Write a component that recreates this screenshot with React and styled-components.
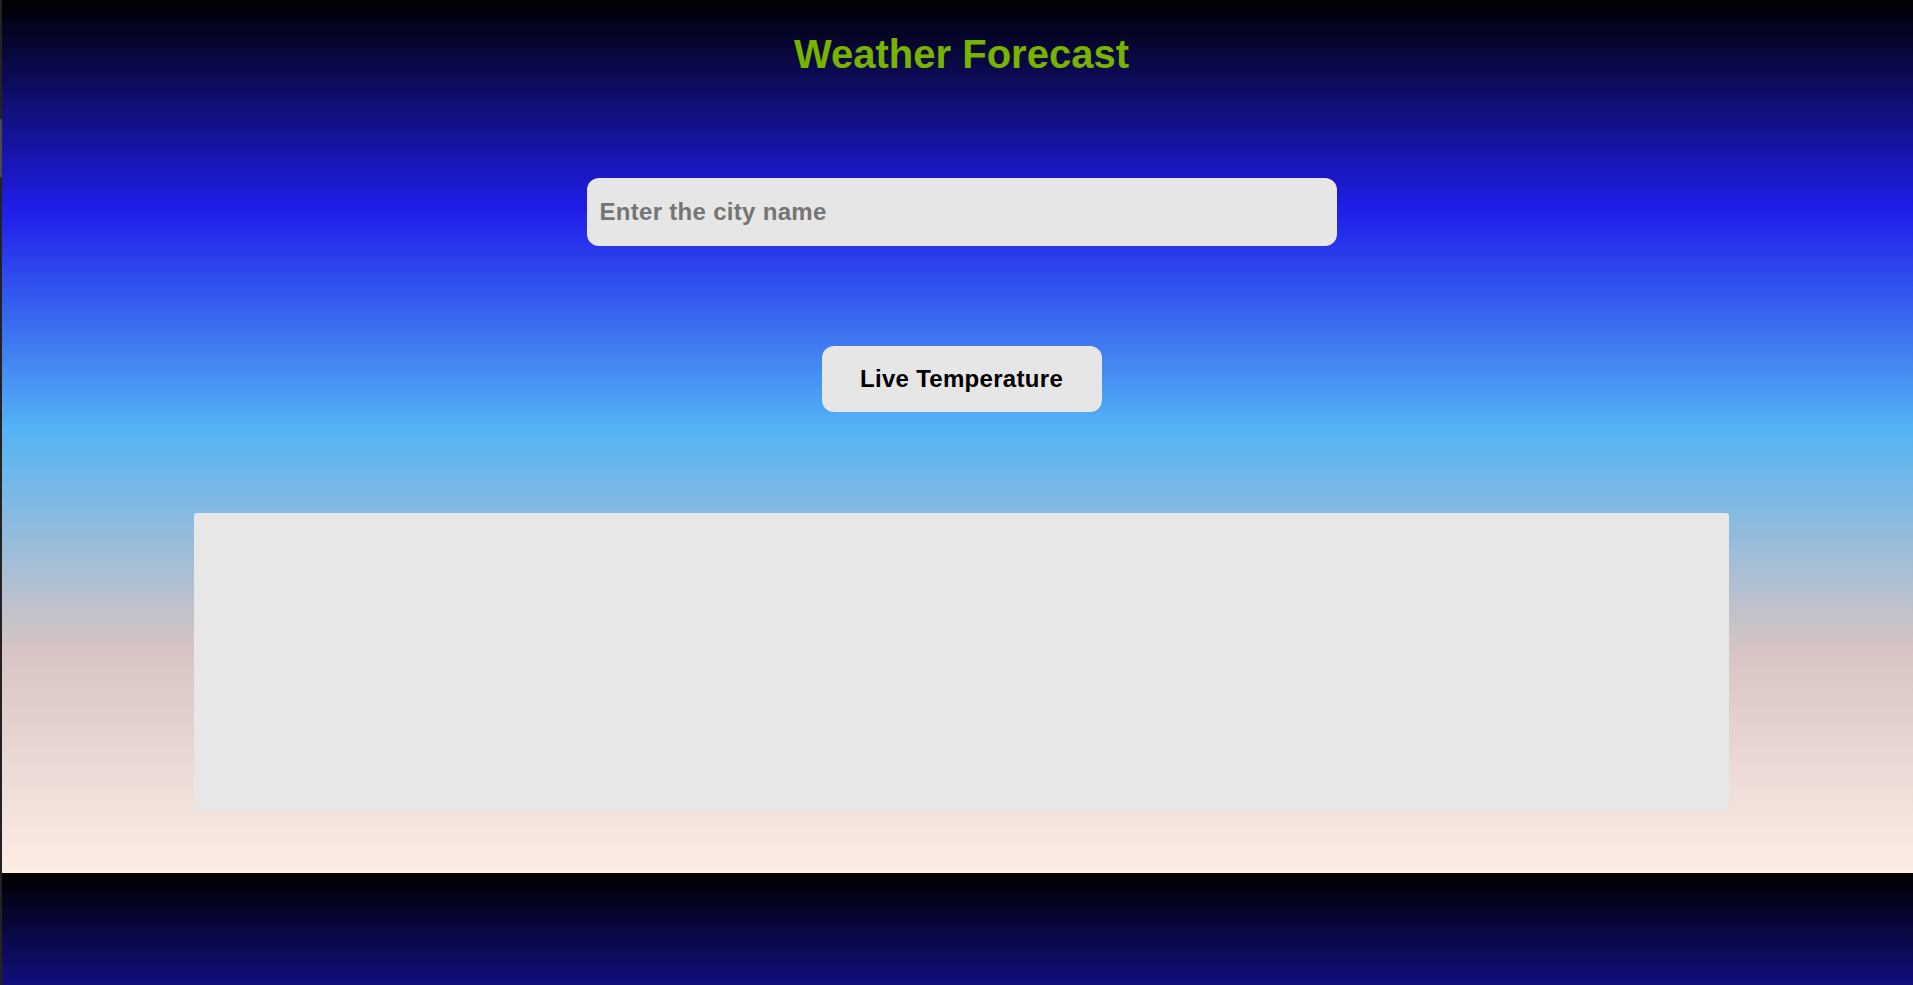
import React from 'react';
import styled, { createGlobalStyle } from 'styled-components';

const GlobalStyle = createGlobalStyle`
  html {
    background: linear-gradient(#000000 0%, #1f1de9 24%, #53b3f5 49%, #d5c4c3 74%, #fdede5 100%);
    background-size: 100% 873px;
    background-repeat: repeat-y;
  }
  body {
    margin: 0;
    font-family: 'Liberation Sans', Arial, sans-serif;
  }
`;

const Page = styled.div`
  display: flex;
  min-height: 100vh;
`;

const Edge = styled.div`
  width: 2px;
  flex-shrink: 0;
  background: #222222;
  display: flex;
  flex-direction: column;
`;

const EdgeThumb = styled.div`
  margin-top: 119px;
  height: 58px;
  background: #4a4a4a;
`;

const Main = styled.main`
  flex: 1;
  height: 873px;
  padding-left: 8px;
  display: flex;
  flex-direction: column;
  align-items: center;
  box-sizing: border-box;
`;

const Title = styled.h1`
  margin: 31px 0 0;
  font-size: 40px;
  line-height: 46px;
  font-weight: 700;
  color: #78b300;
`;

const CityInput = styled.input`
  margin-top: 101px;
  width: 750px;
  height: 68px;
  box-sizing: border-box;
  border: none;
  outline: none;
  border-radius: 12px;
  background: #e6e6e6;
  padding: 0 13px;
  font-family: 'Liberation Sans', Arial, sans-serif;
  font-size: 24px;
  font-weight: 700;
  letter-spacing: 0.3px;
  color: #222;

  &::placeholder {
    color: #757575;
  }
`;

const LiveButton = styled.button`
  margin-top: 100px;
  width: 280px;
  height: 66px;
  border: none;
  border-radius: 12px;
  background: #e6e6e6;
  font-family: 'Liberation Sans', Arial, sans-serif;
  font-size: 24px;
  font-weight: 700;
  letter-spacing: 0.3px;
  color: #000;
  cursor: pointer;
`;

const ResultPanel = styled.section`
  margin-top: 101px;
  width: 1535px;
  height: 297px;
  border-radius: 3px;
  background: #e7e7e7;
`;

export default function App() {
  return (
    <>
      <GlobalStyle />
      <Page>
        <Edge>
          <EdgeThumb />
        </Edge>
        <Main>
          <Title>Weather Forecast</Title>
          <CityInput type="text" placeholder="Enter the city name" />
          <LiveButton>Live Temperature</LiveButton>
          <ResultPanel />
        </Main>
      </Page>
    </>
  );
}
